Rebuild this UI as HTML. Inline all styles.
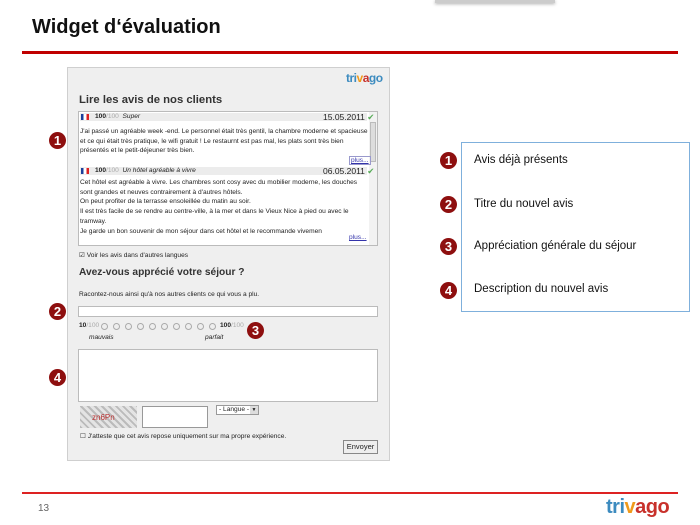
<!DOCTYPE html>
<html><head><meta charset="utf-8"><style>
*{margin:0;padding:0;box-sizing:border-box}
body{width:700px;height:525px;background:#fff;position:relative;overflow:hidden;font-family:"Liberation Sans",Arial,sans-serif;color:#222}
.a{position:absolute;white-space:nowrap}
.num{position:absolute;width:17px;height:17px;border-radius:50%;background:#8e0f0f;color:#fff;font:bold 13px/17px "Liberation Sans",sans-serif;text-align:center}
.s{font-size:6.6px;color:#222}
.rt{font-size:11.5px;color:#111}
.tv{font-weight:bold;letter-spacing:-0.5px}
.tv .b{color:#3c8bbf}.tv .o{color:#f09a1a}.tv .r{color:#c8312b}
.hdr{position:absolute;left:80px;width:287px;height:8px;background:#ececec}
.flag{position:absolute;width:8px;height:6px;background:linear-gradient(90deg,#1c3f9a 0 33%,#fff 33% 66%,#d22 66%)}
.rad{position:absolute;width:7px;height:7px;border:1px solid #aaa;border-radius:50%;background:#eee}
</style></head><body>
<div class="a" style="left:435px;top:0;width:120px;height:3px;background:#ccc;box-shadow:0 1px 3px #aaa"></div>
<div class="a" style="left:32px;top:16px;font-size:20px;font-weight:bold;color:#111;font-family:'Liberation Sans Narrow','Liberation Sans',sans-serif">Widget d‘évaluation</div>
<div class="a" style="left:22px;top:51px;width:656px;height:3px;background:#c00000"></div>

<div class="a" style="left:67px;top:67px;width:323px;height:394px;background:#efefef;border:1px solid #cfcfcf"></div>
<div class="a tv" style="left:346px;top:71px;font-size:12px"><span class="b">tri</span><span class="o">v</span><span class="r">a</span><span class="b">go</span></div>
<div class="a" style="left:79px;top:94px;font-size:11.3px;font-weight:bold;color:#333">Lire les avis de nos clients</div>
<div class="a" style="left:78px;top:111px;width:300px;height:135px;background:#fff;border:1px solid #bbb"></div>
<div class="a" style="left:369px;top:112px;width:8px;height:133px;background:#f2f2f2"></div>
<div class="a" style="left:370px;top:122px;width:6px;height:40px;background:#ddd;border:1px solid #bbb"></div>
<div class="hdr" style="top:113px"></div>
<div class="flag" style="left:81px;top:114px"></div>
<div class="a s" style="left:95px;top:113px"><b>100</b><span style="color:#aaa">/100</span> &nbsp;<i>Super</i></div>
<div class="a s" style="left:323px;top:112px;font-size:8.5px">15.05.2011 <span style="color:#5a5">✔</span></div>
<div class="a s" style="left:80px;top:127px;line-height:9.5px">J'ai passé un agréable week -end. Le personnel était très gentil, la chambre moderne et spacieuse<br>et ce qui était très pratique, le wifi gratuit ! Le restaurnt est pas mal, les plats sont très bien<br>présentés et le petit-déjeuner très bien.</div>
<div class="a s" style="left:349px;top:156px;color:#33a;text-decoration:underline;border:1px solid #99c;padding:0 1px">plus...</div>
<div class="hdr" style="top:167px"></div>
<div class="flag" style="left:81px;top:168px"></div>
<div class="a s" style="left:95px;top:167px"><b>100</b><span style="color:#aaa">/100</span> &nbsp;<i>Un hôtel agréable à vivre</i></div>
<div class="a s" style="left:323px;top:166px;font-size:8.5px">06.05.2011 <span style="color:#5a5">✔</span></div>
<div class="a s" style="left:80px;top:178px;line-height:9.7px">Cet hôtel est agréable à vivre. Les chambres sont cosy avec du mobilier moderne, les douches<br>sont grandes et neuves contrairement à d'autres hôtels.<br>On peut profiter de la terrasse ensoleillée du matin au soir.<br>Il est très facile de se rendre au centre-ville, à la mer et dans le Vieux Nice à pied ou avec le<br>tramway.<br>Je garde un bon souvenir de mon séjour dans cet hôtel et le recommande vivemen</div>
<div class="a s" style="left:349px;top:234px;color:#33a;text-decoration:underline">plus...</div>
<div class="a s" style="left:79px;top:251px">☑ Voir les avis dans d'autres langues</div>
<div class="a" style="left:79px;top:267px;font-size:10.2px;font-weight:bold;color:#333">Avez-vous apprécié votre séjour ?</div>
<div class="a s" style="left:79px;top:291px">Racontez-nous ainsi qu'à nos autres clients ce qui vous a plu.</div>
<div class="a" style="left:78px;top:306px;width:300px;height:11px;background:#fff;border:1px solid #bbb"></div>
<div class="a s" style="left:79px;top:322px"><b>10</b><span style="color:#aaa">/100</span></div>
<div class="rad" style="left:101px;top:323px"></div><div class="rad" style="left:113px;top:323px"></div><div class="rad" style="left:125px;top:323px"></div><div class="rad" style="left:137px;top:323px"></div><div class="rad" style="left:149px;top:323px"></div><div class="rad" style="left:161px;top:323px"></div><div class="rad" style="left:173px;top:323px"></div><div class="rad" style="left:185px;top:323px"></div><div class="rad" style="left:197px;top:323px"></div><div class="rad" style="left:209px;top:323px"></div>
<div class="a s" style="left:220px;top:322px"><b>100</b><span style="color:#aaa">/100</span></div>
<div class="a s" style="left:89px;top:334px;font-style:italic">mauvais</div>
<div class="a s" style="left:205px;top:334px;font-style:italic">parfait</div>
<div class="a" style="left:78px;top:349px;width:300px;height:53px;background:#fff;border:1px solid #bbb"></div>
<div class="a" style="left:80px;top:406px;width:57px;height:22px;background:repeating-linear-gradient(45deg,#bbb 0 2px,#e4e4e4 2px 5px)"></div>
<div class="a" style="left:92px;top:413px;font-size:8px;color:#b33">zn6Pn</div>
<div class="a" style="left:142px;top:406px;width:66px;height:22px;background:#fff;border:1px solid #999"></div>
<div class="a s" style="left:216px;top:405px;width:43px;height:10px;background:#fff;border:1px solid #999;padding-left:2px;line-height:8px">- Langue -<span style="position:absolute;right:0;top:0;width:8px;height:8px;background:#ddd;font-size:5px;text-align:center">▼</span></div>
<div class="a s" style="left:80px;top:432px">☐ J'atteste que cet avis repose uniquement sur ma propre expérience.</div>
<div class="a s" style="left:343px;top:440px;width:35px;height:14px;background:#eee;border:1px solid #888;text-align:center;line-height:12px;font-size:7.5px">Envoyer</div>

<div class="num" style="left:49px;top:132px">1</div>
<div class="num" style="left:49px;top:303px">2</div>
<div class="num" style="left:247px;top:322px">3</div>
<div class="num" style="left:49px;top:369px">4</div>

<div class="a" style="left:461px;top:142px;width:229px;height:170px;border:1px solid #7fb0dc"></div>
<div class="num" style="left:440px;top:152px">1</div>
<div class="num" style="left:440px;top:196px">2</div>
<div class="num" style="left:440px;top:238px">3</div>
<div class="num" style="left:440px;top:282px">4</div>
<div class="a rt" style="left:474px;top:154px">Avis déjà présents</div>
<div class="a rt" style="left:474px;top:198px">Titre du nouvel avis</div>
<div class="a rt" style="left:474px;top:240px">Appréciation générale du séjour</div>
<div class="a rt" style="left:474px;top:283px">Description du nouvel avis</div>

<div class="a" style="left:22px;top:492px;width:656px;height:2px;background:#d22"></div>
<div class="a" style="left:38px;top:503px;font-size:10px;color:#666">13</div>
<div class="a tv" style="left:606px;top:496px;font-size:20px"><span class="b">tri</span><span class="o">v</span><span class="r">a</span><span class="r">go</span></div>
</body></html>
